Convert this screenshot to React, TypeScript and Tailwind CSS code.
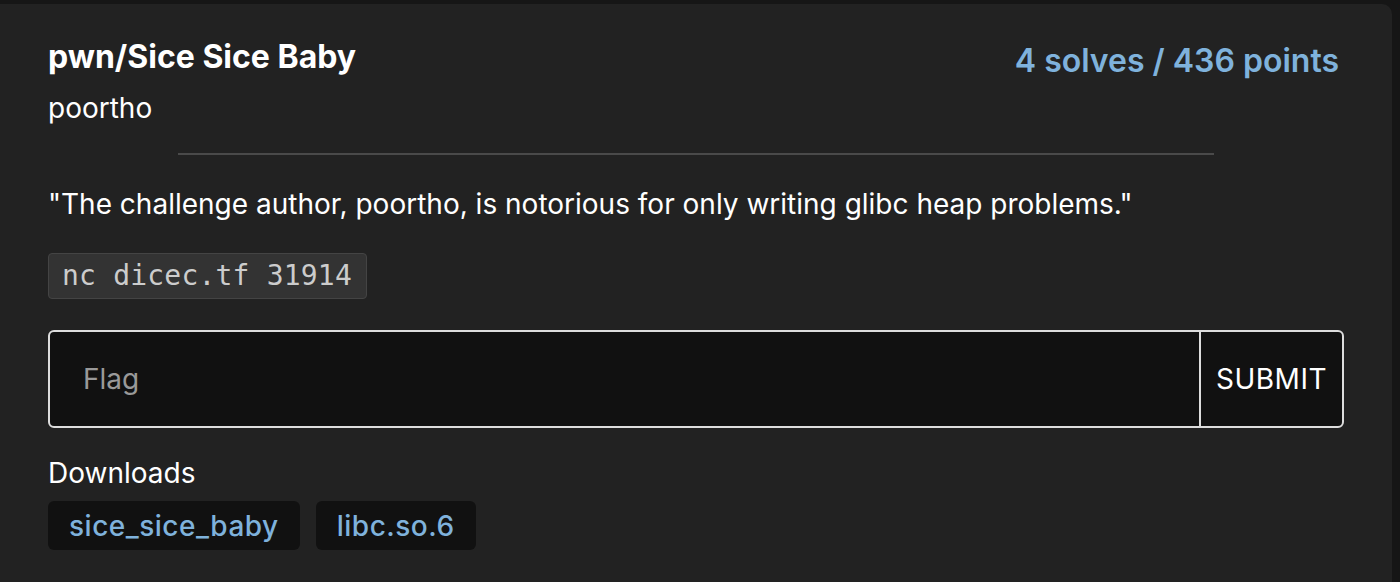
export default function App() {
  const downloads = ['sice_sice_baby', 'libc.so.6'];

  return (
    <div className="w-[1400px] h-[582px] bg-[#161616] overflow-hidden pt-[4px] font-['Inter','Liberation_Sans',sans-serif]">
      <div className="w-[1392px] h-[600px] bg-[#222222] rounded-tr-[10px] pl-[48px] pr-[48px] pt-[34px]">
        {/* Header */}
        <div className="flex items-start justify-between">
          <div>
            <h1 className="text-[32px] leading-[38px] font-bold text-white">pwn/Sice Sice Baby</h1>
            <p className="text-[28px] leading-[34px] text-white mt-[15px]">poortho</p>
          </div>
          <div className="text-[32px] leading-[38px] font-semibold text-[#7fb2dc] mt-[4px] mr-[5px]">
            4 solves / 436 points
          </div>
        </div>

        <hr className="w-4/5 mx-auto mt-[28px] border-0 h-[2px] bg-[#4a4a4a]" />

        <p className="text-[28px] leading-[34px] text-white mt-[32px]">
          "The challenge author, poortho, is notorious for only writing glibc heap problems."
        </p>

        <div className="mt-[32px] flex">
          <code className="block bg-[#333333] border border-[#444444] rounded-[4px] pl-[13px] pr-[14px] py-[5px] text-[28px] leading-[34px] tracking-[0.2px] text-[#cccccc] font-['DejaVu_Sans_Mono',monospace]">
            nc dicec.tf 31914
          </code>
        </div>

        {/* Flag input */}
        <div className="mt-[31px] flex h-[98px] w-[1296px] border-2 border-[#dddddd] rounded-[6px] bg-[#111111] overflow-hidden">
          <div className="flex-1 flex items-center pl-[33px] text-[28px] text-[#999999]">Flag</div>
          <div className="w-[143px] border-l-2 border-[#dddddd] flex items-center justify-center text-[28px] tracking-[0.5px] text-white">
            SUBMIT
          </div>
        </div>

        {/* Downloads */}
        <div className="mt-[28px] text-[28px] leading-[34px] text-white">Downloads</div>
        <div className="flex gap-[16px] mt-[11px]">
          {downloads.map(name => (
            <a
              key={name}
              className="h-[49px] px-[21px] flex items-center bg-[#111111] rounded-[6px] text-[28px] font-medium tracking-[0.5px] text-[#7fb2dc]"
            >
              {name}
            </a>
          ))}
        </div>
      </div>
    </div>
  );
}
